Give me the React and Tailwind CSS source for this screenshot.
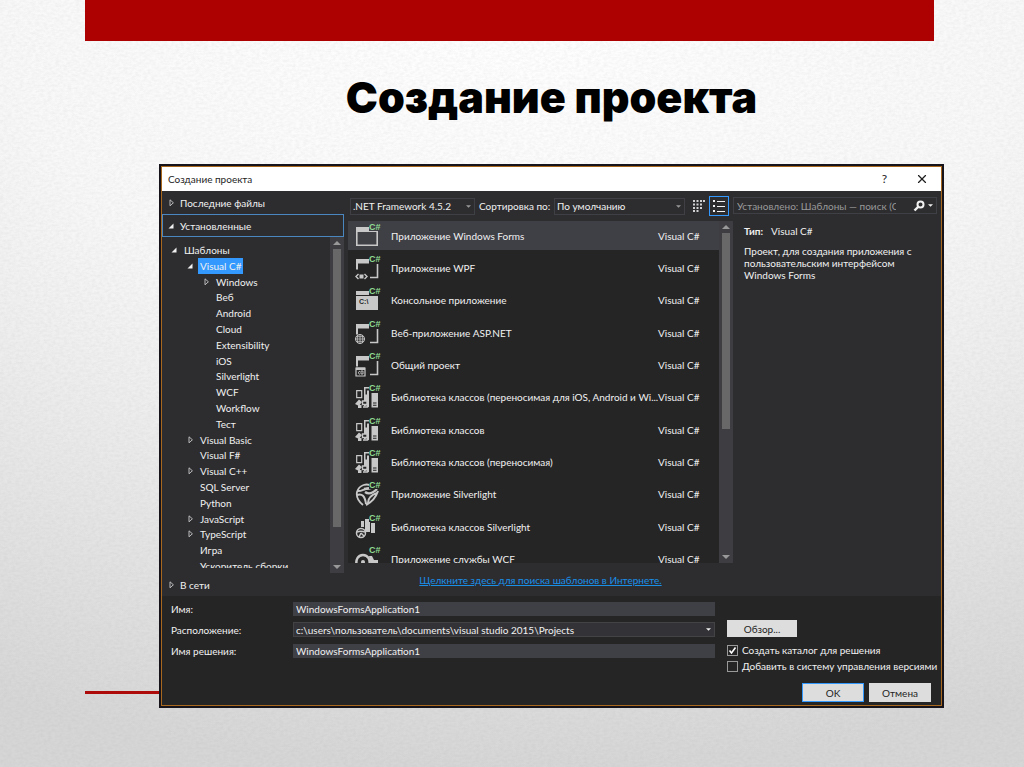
import React, { useState } from 'react';
import { X } from 'lucide-react';

const treeItems = [
  { label: 'Шаблоны', level: 0, state: 'open' },
  { label: 'Visual C#', level: 1, state: 'open' },
  { label: 'Windows', level: 2, state: 'closed' },
  { label: 'Веб', level: 2 },
  { label: 'Android', level: 2 },
  { label: 'Cloud', level: 2 },
  { label: 'Extensibility', level: 2 },
  { label: 'iOS', level: 2 },
  { label: 'Silverlight', level: 2 },
  { label: 'WCF', level: 2 },
  { label: 'Workflow', level: 2 },
  { label: 'Тест', level: 2 },
  { label: 'Visual Basic', level: 1, state: 'closed' },
  { label: 'Visual F#', level: 1 },
  { label: 'Visual C++', level: 1, state: 'closed' },
  { label: 'SQL Server', level: 1 },
  { label: 'Python', level: 1 },
  { label: 'JavaScript', level: 1, state: 'closed' },
  { label: 'TypeScript', level: 1, state: 'closed' },
  { label: 'Игра', level: 1 },
  { label: 'Ускоритель сборки', level: 1 },
];

const levelPadding = ['pl-2', 'pl-6', 'pl-10'];

const templates = [
  { name: 'Приложение Windows Forms', icon: 'forms' },
  { name: 'Приложение WPF', icon: 'wpf' },
  { name: 'Консольное приложение', icon: 'console' },
  { name: 'Веб-приложение ASP.NET', icon: 'web' },
  { name: 'Общий проект', icon: 'shared' },
  { name: 'Библиотека классов (переносимая для iOS, Android и Wi...', icon: 'library' },
  { name: 'Библиотека классов', icon: 'library' },
  { name: 'Библиотека классов (переносимая)', icon: 'library' },
  { name: 'Приложение Silverlight', icon: 'silverlight' },
  { name: 'Библиотека классов Silverlight', icon: 'silverlightLibrary' },
  { name: 'Приложение службы WCF', icon: 'service' },
];

const Expander = ({ state }) => (
  <svg viewBox="0 0 8 8" className="h-2 w-2 shrink-0" aria-hidden="true">
    {state === 'open' && <path d="M6.5 1.5v5h-5z" fill="#f1f1f1" />}
    {state === 'closed' && <path d="M3 .8v6l3.4-3z" fill="none" stroke="#c8c8c8" strokeWidth=".9" />}
  </svg>
);

const Caret = ({ up, className }) => (
  <svg viewBox="0 0 8 4" className={className} aria-hidden="true">
    <path d={up ? 'M0 4h8L4 0z' : 'M0 0h8L4 4z'} fill="currentColor" />
  </svg>
);

const WindowFrame = () => (
  <>
    <path d="M1 4h13v4.500H3v6H1z" fill="#c8c8c8" />
    <path d="M22.500 9v13.500H15" fill="none" stroke="#c8c8c8" strokeWidth="1.600" />
  </>
);

const Books = () => (
  <g fill="#c8c8c8">
    <path d="M1.700 6.700h5v7h-5z" fill="none" stroke="#c8c8c8" strokeWidth="1.200" />
    <path d="M9 3h5v20H9z" />
    <path d="M10.500 4.500h3.500v2h-2v4h-1.500z" fill="#252526" />
    <path d="M16.500 9H23v14.500h-6.500z" />
    <path d="M18 18.500h3.500v1H18zM18 20.800h3.500v1H18z" fill="#252526" />
  </g>
);

const Wheel = () => (
  <g fill="none" stroke="#c8c8c8">
    <path d="M19 6C12 1 4 4 2 11c-1 5 1 9 6 13" strokeWidth="1.800" />
    <path d="M2 10c5 1 7-3 14-3M2 14c5-2 8 1 9 9M23 10c-2 6-6 11-12 14M13 22c0-5 3-8 9-10" strokeWidth="2" />
    <path d="M9 8c4-1 7 0 9-2M10 11c4 3 8 1 12-3" strokeWidth="2.400" />
  </g>
);

const TemplateIcon = ({ type }) => (
  <svg viewBox="0 0 26 26" className="h-[26px] w-[26px] shrink-0" aria-hidden="true">
    {type === 'forms' && (
      <>
        <path d="M1 4h22v5H1z" fill="#c8c8c8" />
        <path d="M1.800 8v14.200h20.400V9" fill="none" stroke="#c8c8c8" strokeWidth="1.600" />
      </>
    )}
    {type === 'wpf' && (
      <>
        <WindowFrame />
        <path d="M3.500 19L1 21.500 3.500 24M9.500 19l2.500 2.500L9.500 24" fill="none" stroke="#c8c8c8" strokeWidth="1.400" />
        <path d="M4.500 19.500h4v4h-4z" fill="#c8c8c8" />
      </>
    )}
    {type === 'console' && (
      <>
        <path d="M1 4h22v4H1zM1 9h22v14H1z" fill="#c8c8c8" />
        <text x="4" y="17" fontSize="7" fontWeight="700" fontFamily="Liberation Sans" fill="#252526">C:\</text>
      </>
    )}
    {type === 'web' && (
      <>
        <WindowFrame />
        <circle cx="5" cy="19" r="4.500" fill="#252526" stroke="#c8c8c8" />
        <path d="M5 14.500v9M.5 19h9M1.500 16.700h7M1.500 21.300h7M3 15c-1 3-1 5 0 8M7 15c1 3 1 5 0 8" fill="none" stroke="#c8c8c8" strokeWidth=".8" />
      </>
    )}
    {type === 'shared' && (
      <>
        <WindowFrame />
        <path d="M1 16h9v8H1z" fill="none" stroke="#c8c8c8" strokeWidth="1.200" />
        <path d="M1 15.500h9v2.500H1z" fill="#c8c8c8" />
        <path d="M5 19l-2 1.700L5 22.500M6 19h2v3H6z" fill="none" stroke="#c8c8c8" strokeWidth=".9" />
      </>
    )}
    {type === 'library' && (
      <>
        <Books />
        <path d="M0 20l4-4.500 3 2.500-3 4zM3 21h3.500v3H3z" fill="#c8c8c8" />
        <path d="M7.500 17h4.500v3.500H7.500zM8 23h4.500v-2" fill="#252526" stroke="#c8c8c8" strokeWidth="1.400" />
      </>
    )}
    {type === 'silverlight' && <Wheel />}
    {type === 'silverlightLibrary' && (
      <>
        <path d="M6 7h3v6H6zM10 5h5v13h-5zM16 9h4v10h-4z" fill="#c8c8c8" />
        <circle cx="6" cy="19" r="4.500" fill="#252526" stroke="#c8c8c8" strokeWidth="1.500" />
        <path d="M2 18c3-1 5-1 8 0M6 19l-2 4M6 19l3 3" fill="none" stroke="#c8c8c8" strokeWidth="1.500" />
      </>
    )}
    {type === 'service' && (
      <>
        <path d="M2 20c-2-6 1-11 6-11s8 5 6 11" fill="none" stroke="#c8c8c8" strokeWidth="2.500" />
        <circle cx="8" cy="16" r="2" fill="#c8c8c8" />
        <path d="M14 10h3l2 4h4v6h-7z" fill="#c8c8c8" />
      </>
    )}
    <path d="M14 0h12v8H14z" fill={type === 'forms' ? '#3f3f46' : '#252526'} />
    <text x="14" y="7" fontSize="9" fontWeight="700" fontFamily="Liberation Sans" fill="#8fdc92">
      C#
    </text>
  </svg>
);

const Scrollbar = ({ thumbClass }) => (
  <div className="flex w-[14px] shrink-0 flex-col items-center bg-[#3e3e42] py-1 text-[#999999]">
    <Caret up className="h-1 w-2" />
    <div className={`mt-1 w-2 bg-[#686868] ${thumbClass}`} />
    <Caret className="mt-auto h-1 w-2" />
  </div>
);

const SectionButton = ({ label, state, active }) => (
  <button
    type="button"
    className={`flex h-[23px] w-full items-center gap-1 border pl-1 text-left ${
      active ? 'border-[#4a86c0]' : 'border-transparent'
    }`}
  >
    <Expander state={state} />
    <span className="pl-[1px]">{label}</span>
  </button>
);

const ComboBox = ({ id, value, className, label }) => (
  <div className={`relative ${className}`}>
    <select
      id={id}
      aria-label={label}
      className="block h-[17px] w-full appearance-none border border-[#3f3f46] bg-[#2d2d30] px-[2px] leading-3 text-[#f1f1f1]"
    >
      <option>{value}</option>
    </select>
    <Caret className="pointer-events-none absolute top-[7px] right-1 h-[3px] w-[5px] text-[#999999]" />
  </div>
);

const App = () => {
  const [selectedNode, setSelectedNode] = useState('Visual C#');
  const [selectedTemplate, setSelectedTemplate] = useState(0);
  const [createDirectory, setCreateDirectory] = useState(true);
  const [sourceControl, setSourceControl] = useState(false);

  const fieldClass = 'h-[14px] w-full bg-[#3f3f46] px-[3px] text-[#f1f1f1] outline-none';
  const checkClass =
    'h-[11px] w-[11px] shrink-0 appearance-none border border-[#999999] bg-[#252526]';

  return (
    <main className="relative isolate flex min-h-screen flex-col bg-[radial-gradient(120%_100%_at_50%_0%,#ffffff_0%,#f8f8f8_42%,#ebebeb_65%,#d6d6d6_100%)] font-['Lato',sans-serif] text-[10px] leading-3">
      {/* paper grain of the slide */}
      <svg className="absolute inset-0 -z-10 h-full w-full opacity-10" aria-hidden="true">
        <filter id="paper">
          <feTurbulence type="fractalNoise" baseFrequency=".25 .4" numOctaves="3" />
          <feColorMatrix values="0 0 0 0 .3  0 0 0 0 .3  0 0 0 0 .3  1.600 0 0 0 -.5" />
        </filter>
        <rect width="100%" height="100%" filter="url(#paper)" />
      </svg>

      <div className="mr-[90px] ml-[85px] h-[41px] bg-[#ad0000]" />
      <h1 className="mt-8 pl-[79px] text-center font-['Inter',sans-serif] text-[43px] leading-[48px] font-black text-black">
        Создание проекта
      </h1>

      <div className="mt-[43px] mr-20 flex pl-[85px]">
        <div className="mb-[14px] h-[3px] w-[74px] shrink-0 self-end bg-[#ad0a0a]" />

        <section className="min-w-0 flex-1 border-2 border-[#17131a] bg-[#2d2d30] text-[#f1f1f1]">
          <div className="border border-[#a8691f]">
            <header className="flex h-6 items-center bg-white pr-3 pl-[6px] text-[#1e1e1e]">
              <h2>Создание проекта</h2>
              <button type="button" className="ml-auto px-2 text-xs" aria-label="Справка">
                ?
              </button>
              <button type="button" className="ml-5" aria-label="Закрыть">
                <X className="h-[14px] w-[14px]" strokeWidth={2} />
              </button>
            </header>

            <div className="flex h-[405px]">
              <nav className="flex w-[182px] shrink-0 flex-col">
                <SectionButton label="Последние файлы" state="closed" />
                <SectionButton label="Установленные" state="open" active />
                <div className="flex min-h-0 flex-1">
                  <div className="mb-[5px] min-w-0 flex-1 overflow-hidden pt-[5px]">
                    <ul className="grid h-[332px] auto-rows-fr">
                      {treeItems.map((item) => (
                        <li key={item.label} className={`flex items-center gap-1 ${levelPadding[item.level]}`}>
                          <Expander state={item.state} />
                          <button
                            type="button"
                            onClick={() => setSelectedNode(item.label)}
                            className={`h-full px-[2px] whitespace-nowrap ${
                              selectedNode === item.label ? 'bg-[#3399ff]' : ''
                            }`}
                          >
                            {item.label}
                          </button>
                        </li>
                      ))}
                    </ul>
                  </div>
                  <Scrollbar thumbClass="h-[278px]" />
                </div>
                <SectionButton label="В сети" state="closed" />
              </nav>

              <div className="ml-1 flex w-[385px] shrink-0 flex-col">
                <div className="flex h-[30px] items-center">
                  <ComboBox label="Платформа" value=".NET Framework 4.5.2" className="ml-[2px] w-[125px]" />
                  <label htmlFor="sort" className="ml-1 w-[75px] whitespace-nowrap">
                    Сортировка по:
                  </label>
                  <ComboBox id="sort" value="По умолчанию" className="w-[131px]" />
                  <button type="button" className="ml-2" aria-label="Мелкие значки">
                    <svg viewBox="0 0 12 12" className="h-3 w-3">
                      <path
                        d="M0 0h2v2H0zM3.500 0h2v2h-2zM7 0h2v2H7zM10 0h2v2h-2zM0 3.500h2v2H0zM3.500 3.500h2v2h-2zM7 3.500h2v2H7zM0 7h2v2H0zM3.500 7h2v2h-2zM7 7h2v2H7zM0 10h2v2H0zM3.500 10h2v2h-2z"
                        fill="#d0d0d0"
                      />
                    </svg>
                  </button>
                  <button type="button" className="ml-1 border border-[#3399ff] p-[2px]" aria-label="Список">
                    <svg viewBox="0 0 14 14" className="h-[14px] w-[14px]">
                      <path d="M1 1h2v2H1zM1 6h2v2H1zM1 11h2v2H1zM5 2h8v1H5zM5 7h8v1H5zM5 12h8v1H5z" fill="#f1f1f1" />
                    </svg>
                  </button>
                </div>

                <div className="flex h-[342px]">
                  <div className="min-w-0 flex-1 overflow-hidden bg-[#252526]">
                    <ul className="grid h-[356px] auto-rows-fr grid-cols-1">
                      {templates.map((template, index) => (
                        <li key={template.name}>
                          <button
                            type="button"
                            onClick={() => setSelectedTemplate(index)}
                            className={`flex h-[29px] w-full items-center pr-[19px] pl-[7px] text-left ${
                              selectedTemplate === index ? 'bg-[#3f3f46]' : ''
                            }`}
                          >
                            <TemplateIcon type={template.icon} />
                            <span className="ml-[10px] min-w-0 flex-1 whitespace-nowrap">{template.name}</span>
                            <span className="w-[42px] shrink-0 whitespace-nowrap">Visual C#</span>
                          </button>
                        </li>
                      ))}
                    </ul>
                  </div>
                  <Scrollbar thumbClass="h-[196px]" />
                </div>

                <div className="pt-[11px] text-center">
                  <a href="#online" className="text-[#1a8fe8] underline">
                    Щелкните здесь для поиска шаблонов в Интернете.
                  </a>
                </div>
              </div>

              <aside className="min-w-0 flex-1 pr-1">
                <div className="mt-[6px] flex h-[17px] items-center border border-[#3f3f46]">
                  <input
                    type="search"
                    aria-label="Поиск шаблонов"
                    placeholder="Установлено: Шаблоны — поиск (Ctrl+E)"
                    className="ml-[3px] min-w-0 flex-1 bg-transparent placeholder:text-[#999999]"
                  />
                  <svg viewBox="0 0 12 12" className="ml-[6px] h-3 w-3" aria-hidden="true">
                    <circle cx="7.500" cy="4.500" r="3" fill="none" stroke="#f1f1f1" strokeWidth="2" />
                    <path d="M5.500 6.500L1.500 10.500" stroke="#f1f1f1" strokeWidth="2.400" />
                  </svg>
                  <Caret className="mx-[3px] h-[3px] w-[5px]" />
                </div>
                <p className="mt-[11px] pl-[11px]">
                  <strong className="mr-2">Тип:</strong>Visual C#
                </p>
                <p className="mt-2 pr-4 pl-[11px]">
                  Проект, для создания приложения с пользовательским интерфейсом Windows Forms
                </p>
              </aside>
            </div>

            <form className="flex bg-[#252526] pr-1 pb-[3px] pl-[9px]" onSubmit={(e) => e.preventDefault()}>
              <div className="mt-[2px] grid w-[544px] shrink-0 grid-cols-[122px_1fr] auto-rows-[21px] items-center self-start">
                <label htmlFor="name">Имя:</label>
                <input id="name" defaultValue="WindowsFormsApplication1" className={fieldClass} />
                <label htmlFor="location">Расположение:</label>
                <div className="relative">
                  <select
                    id="location"
                    className="block h-[15px] w-full appearance-none border border-[#434346] bg-[#333337] px-[2px] leading-3 text-[#f1f1f1]"
                  >
                    <option>c:\users\пользователь\documents\visual studio 2015\Projects</option>
                  </select>
                  <Caret className="pointer-events-none absolute top-[6px] right-1 h-[3px] w-[5px]" />
                </div>
                <label htmlFor="solution">Имя решения:</label>
                <input id="solution" defaultValue="WindowsFormsApplication1" className={fieldClass} />
              </div>

              <div className="ml-3 flex min-w-0 flex-1 flex-col pt-6">
                <button type="button" className="h-[17px] w-[70px] bg-[#dddddd] text-[#1e1e1e]">
                  Обзор...
                </button>
                <label className="mt-[5px] flex h-4 items-center gap-1 whitespace-nowrap">
                  <span className="relative flex">
                    <input
                      type="checkbox"
                      checked={createDirectory}
                      onChange={(e) => setCreateDirectory(e.target.checked)}
                      className={checkClass}
                    />
                    {createDirectory && (
                      <svg viewBox="0 0 11 11" className="pointer-events-none absolute inset-0 h-[11px] w-[11px]">
                        <path d="M2.500 5.500l2 2.500 4-5.500" fill="none" stroke="#ffffff" strokeWidth="1.600" />
                      </svg>
                    )}
                  </span>
                  Создать каталог для решения
                </label>
                <label className="flex h-4 items-center gap-1 whitespace-nowrap">
                  <input
                    type="checkbox"
                    checked={sourceControl}
                    onChange={(e) => setSourceControl(e.target.checked)}
                    className={checkClass}
                  />
                  Добавить в систему управления версиями
                </label>
                <div className="mt-[9px] mr-[6px] flex justify-end gap-[5px]">
                  <button type="submit" className="h-[19px] w-[62px] border border-[#3399ff] bg-[#dddddd] text-[#1e1e1e]">
                    OK
                  </button>
                  <button type="button" className="h-[19px] w-[62px] bg-[#dddddd] text-[#1e1e1e]">
                    Отмена
                  </button>
                </div>
              </div>
            </form>
          </div>
        </section>
      </div>
    </main>
  );
};

export default App;
